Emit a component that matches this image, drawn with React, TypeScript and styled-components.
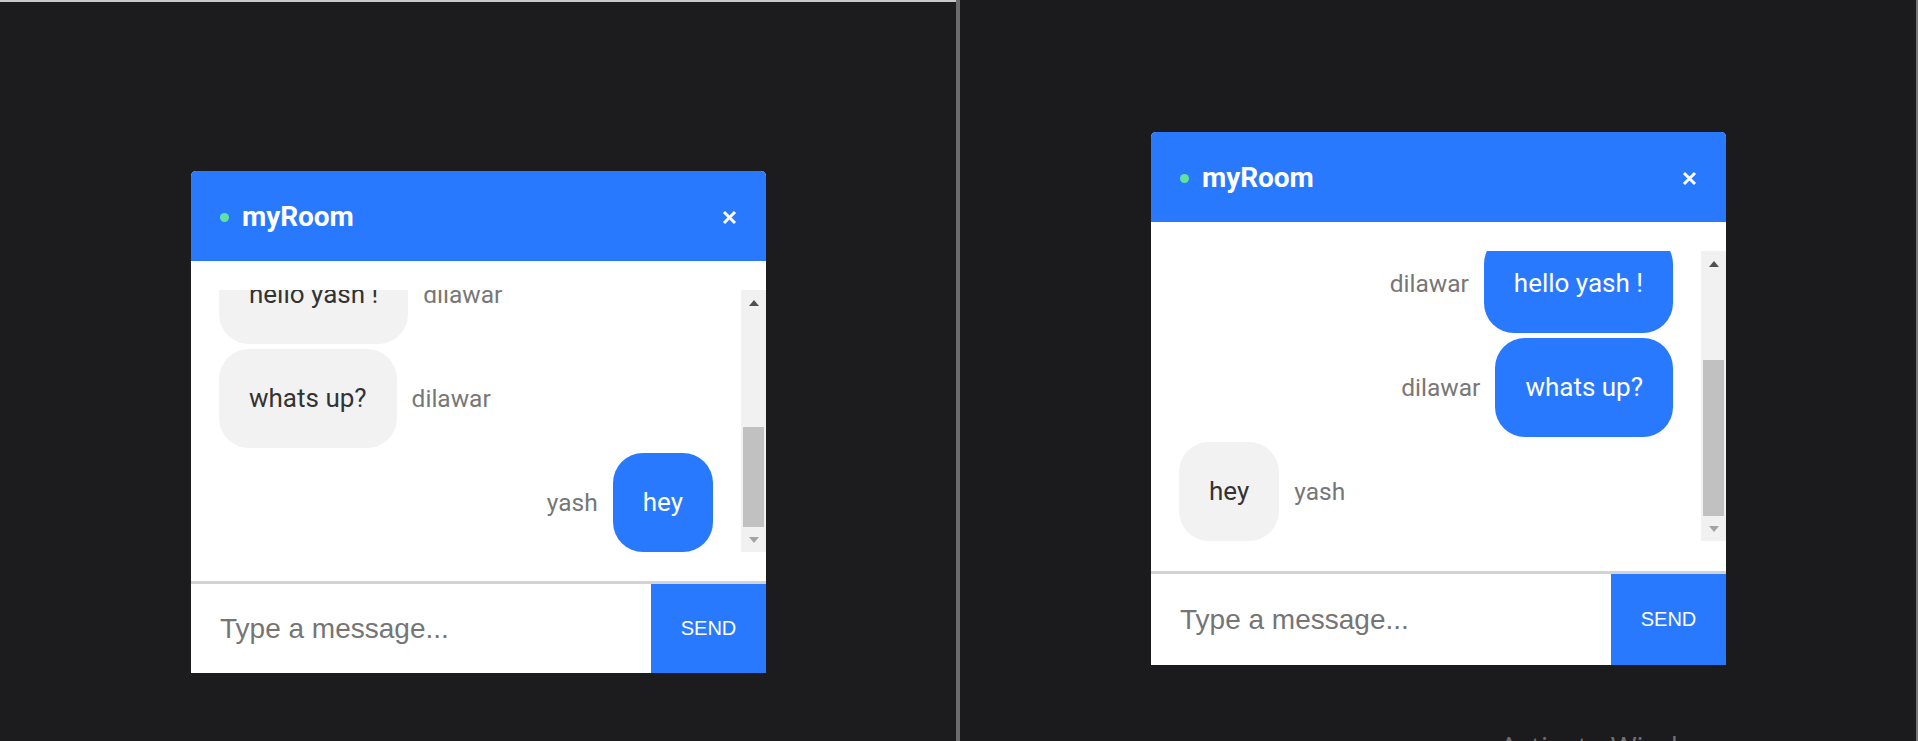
import React from 'react';
import styled, { createGlobalStyle } from 'styled-components';

const BLUE = '#2979ff';

const GlobalStyle = createGlobalStyle`
  html, body {
    margin: 0;
    padding: 0;
    background: #1c1c1e;
    overflow: hidden;
  }
  body {
    font-family: Roboto, "Liberation Sans", sans-serif;
  }
  *, *::before, *::after {
    box-sizing: border-box;
  }
`;

const Page = styled.div`
  display: flex;
  width: 1918px;
  height: 741px;
  overflow: hidden;
`;

const Pane = styled.section<{ $top: number; $bg: string; $rule?: boolean }>`
  position: relative;
  flex: 0 0 956px;
  display: flex;
  justify-content: center;
  align-items: flex-start;
  padding-top: ${(p) => p.$top}px;
  padding-left: 1px;
  background: ${(p) => p.$bg};
  border-top: ${(p) => (p.$rule ? '2px solid #c9c9c9' : 'none')};
`;

const Divider = styled.div`
  flex: 0 0 4px;
  background: #6b6b6b;
`;

const EdgeBar = styled.div`
  flex: 0 0 2px;
  background: #777777;
`;

const Card = styled.div`
  width: 575px;
  display: flex;
  flex-direction: column;
  background: #ffffff;
  border-radius: 5px 5px 0 0;
  overflow: hidden;
`;

const Header = styled.header`
  height: 90px;
  display: flex;
  align-items: center;
  padding: 2px 29px 0 29px;
  background: ${BLUE};
  color: #ffffff;
`;

const StatusDot = styled.span`
  width: 9px;
  height: 9px;
  border-radius: 50%;
  background: #5fe3a1;
  margin-right: 13px;
  flex-shrink: 0;
`;

const Title = styled.h1`
  flex: 1;
  margin: 0;
  font-family: Roboto, "Liberation Sans", sans-serif;
  font-weight: 700;
  font-size: 28px;
  letter-spacing: -0.1px;
  line-height: 1;
`;

const CloseButton = styled.button`
  width: 15px;
  height: 15px;
  padding: 0;
  border: 0;
  background: none;
  display: flex;
  cursor: pointer;
`;

const Body = styled.div<{ $bottom: number }>`
  display: flex;
  padding: 29px 0 ${(p) => p.$bottom}px 0;
`;

const MessageList = styled.div<{ $height: number }>`
  flex: 1;
  height: ${(p) => p.$height}px;
  display: flex;
  flex-direction: column;
  justify-content: flex-end;
  gap: 5px;
  padding: 0 28px;
  overflow: hidden;
`;

const Row = styled.div<{ $own: boolean }>`
  display: flex;
  align-items: center;
  gap: 15px;
  justify-content: ${(p) => (p.$own ? 'flex-end' : 'flex-start')};
  flex-shrink: 0;
`;

const Bubble = styled.div<{ $own: boolean }>`
  flex-shrink: 0;
  padding: 34px 30px;
  border-radius: 30px;
  font-family: Roboto, "Liberation Sans", sans-serif;
  font-size: 26px;
  line-height: 31px;
  white-space: nowrap;
  background: ${(p) => (p.$own ? BLUE : '#f2f2f2')};
  color: ${(p) => (p.$own ? '#ffffff' : '#333333')};
`;

const Sender = styled.span`
  font-family: Roboto, "Liberation Sans", sans-serif;
  font-size: 24.5px;
  color: #777777;
  white-space: nowrap;
`;

const Scrollbar = styled.div`
  flex: 0 0 25px;
  display: flex;
  flex-direction: column;
  background: #f1f1f1;
`;

const ScrollButton = styled.div`
  flex: 0 0 25px;
  display: flex;
  align-items: center;
  justify-content: center;
`;

const Arrow = styled.span<{ $dir: 'up' | 'down'; $color: string }>`
  width: 0;
  height: 0;
  border-left: 5.5px solid transparent;
  border-right: 5.5px solid transparent;
  ${(p) =>
    p.$dir === 'up'
      ? `border-bottom: 6px solid ${p.$color};`
      : `border-top: 6px solid ${p.$color};`}
`;

const Track = styled.div`
  flex: 1;
  display: flex;
  flex-direction: column;
  justify-content: flex-end;
  padding: 0 2px;
`;

const Thumb = styled.div<{ $height: number }>`
  height: ${(p) => p.$height}px;
  background: #c1c1c1;
`;

const Composer = styled.form<{ $height: number }>`
  display: flex;
  height: ${(p) => p.$height}px;
  border-top: 3px solid #d3d3d3;
  margin: 0;
`;

const MessageInput = styled.input`
  flex: 1;
  min-width: 0;
  border: 0;
  outline: none;
  padding: 0 0 0 29px;
  background: #ffffff;
  font-family: "Liberation Sans", Arial, sans-serif;
  font-size: 28px;
  color: #333333;
  &::placeholder {
    color: #757575;
  }
`;

const SendButton = styled.button`
  flex: 0 0 115px;
  border: 0;
  padding: 0;
  background: ${BLUE};
  color: #ffffff;
  font-family: "Liberation Sans", Arial, sans-serif;
  font-size: 20px;
  text-transform: uppercase;
  cursor: pointer;
`;

const Watermark = styled.div`
  position: absolute;
  left: 540px;
  top: 727px;
  font-family: "Open Sans", "Noto Sans", sans-serif;
  font-size: 28px;
  color: rgba(255, 255, 255, 0.4);
  white-space: nowrap;
  pointer-events: none;
`;

type Message = { from: string; text: string };

const messages: Message[] = [
  { from: 'dilawar', text: 'hello yash !' },
  { from: 'dilawar', text: 'whats up?' },
  { from: 'yash', text: 'hey' },
];

const CloseIcon = () => (
  <svg width="15" height="15" viewBox="0 0 15 15">
    <path d="M2 2 L13 13 M13 2 L2 13" stroke="#ffffff" strokeWidth="3" strokeLinecap="butt" fill="none" />
  </svg>
);

type ChatProps = {
  me: string;
  room: string;
  viewport: number;
  thumb: number;
  bodyBottom: number;
  composer: number;
  autoFocus?: boolean;
};

const ChatWindow: React.FC<ChatProps> = ({ me, room, viewport, thumb, bodyBottom, composer, autoFocus }) => (
  <Card>
    <Header>
      <StatusDot />
      <Title>{room}</Title>
      <CloseButton aria-label="close">
        <CloseIcon />
      </CloseButton>
    </Header>
    <Body $bottom={bodyBottom}>
      <MessageList $height={viewport}>
        {messages.map((m, i) => {
          const own = m.from === me;
          return (
            <Row key={i} $own={own}>
              {own && <Sender>{m.from}</Sender>}
              <Bubble $own={own}>{m.text}</Bubble>
              {!own && <Sender>{m.from}</Sender>}
            </Row>
          );
        })}
      </MessageList>
      <Scrollbar>
        <ScrollButton>
          <Arrow $dir="up" $color="#505050" />
        </ScrollButton>
        <Track>
          <Thumb $height={thumb} />
        </Track>
        <ScrollButton>
          <Arrow $dir="down" $color="#a3a3a3" />
        </ScrollButton>
      </Scrollbar>
    </Body>
    <Composer $height={composer} onSubmit={(e) => e.preventDefault()}>
      <MessageInput placeholder="Type a message..." autoFocus={autoFocus} />
      <SendButton type="submit">Send</SendButton>
    </Composer>
  </Card>
);

export default function App() {
  return (
    <>
      <GlobalStyle />
      <Page>
        <Pane $top={169} $bg="#1c1c1e" $rule>
          <ChatWindow
            me="yash"
            room="myRoom"
            viewport={262}
            thumb={100}
            bodyBottom={29}
            composer={92}
            autoFocus
          />
        </Pane>
        <Divider />
        <Pane $top={132} $bg="#1b1b1d">
          <ChatWindow
            me="dilawar"
            room="myRoom"
            viewport={290}
            thumb={156}
            bodyBottom={30}
            composer={94}
          />
          <Watermark>Activate Windows</Watermark>
        </Pane>
        <EdgeBar />
      </Page>
    </>
  );
}
